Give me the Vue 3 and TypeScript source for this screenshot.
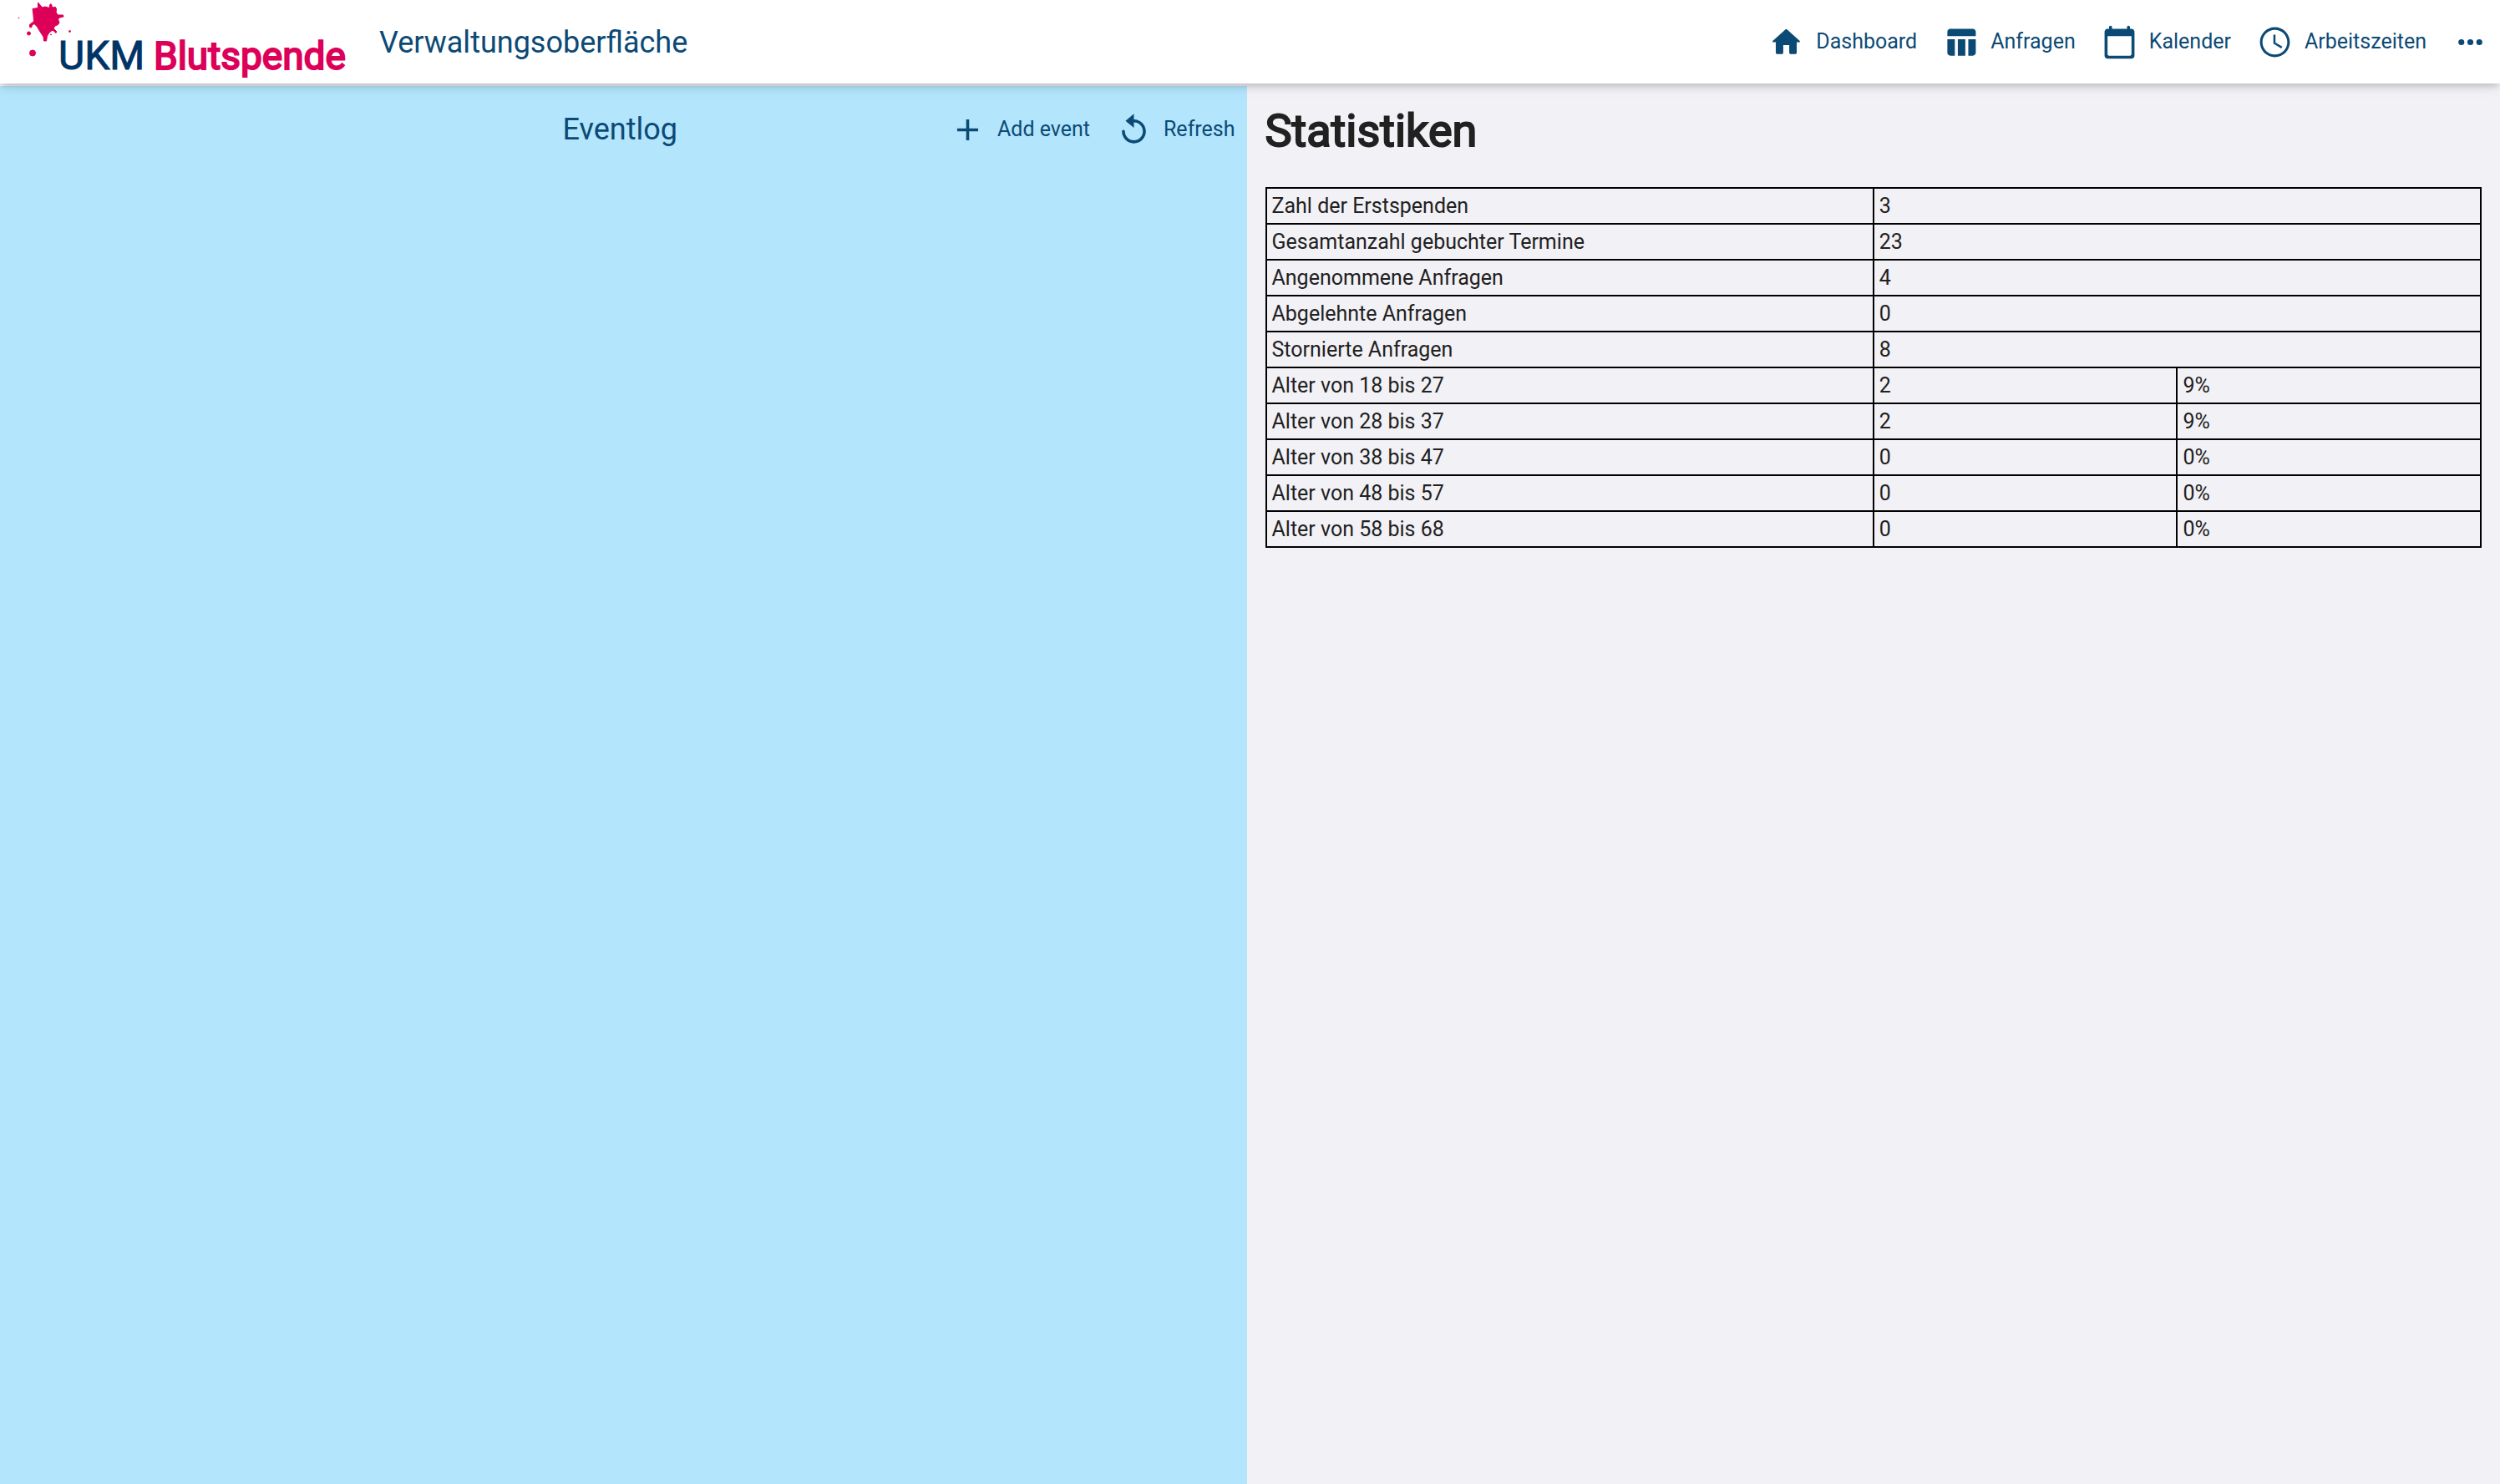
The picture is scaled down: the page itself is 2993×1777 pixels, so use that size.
<script setup lang="ts">
interface NavItem {
  label: string
  icon: string
}

interface StatRow {
  label: string
  value: number
  share?: string
}

const navItems: NavItem[] = [
  {
    label: 'Dashboard',
    icon: 'M10 19v-5h4v5c0 .55.45 1 1 1h3c.55 0 1-.45 1-1v-7h1.7c.46 0 .68-.57.33-.87L12.67 3.6c-.38-.34-.96-.34-1.34 0l-8.36 7.53c-.34.3-.13.87.33.87H5v7c0 .55.45 1 1 1h3c.55 0 1-.45 1-1z',
  },
  {
    label: 'Anfragen',
    icon: 'M10 10.02h5V21h-5V10.02zM17 21h3c1.1 0 2-.9 2-2v-9h-5v11zm3-18H5c-1.1 0-2 .9-2 2v3h19V5c0-1.1-.9-2-2-2zM3 19c0 1.1.9 2 2 2h3V10H3v9z',
  },
  {
    label: 'Kalender',
    icon: 'M20 3h-1V2c0-.55-.45-1-1-1s-1 .45-1 1v1H7V2c0-.55-.45-1-1-1s-1 .45-1 1v1H4c-1.1 0-2 .9-2 2v16c0 1.1.9 2 2 2h16c1.1 0 2-.9 2-2V5c0-1.1-.9-2-2-2zm-1 18H5c-.55 0-1-.45-1-1V8h16v12c0 .55-.45 1-1 1z',
  },
  {
    label: 'Arbeitszeiten',
    icon: 'M11.99 2C6.47 2 2 6.48 2 12s4.47 10 9.99 10C17.52 22 22 17.52 22 12S17.52 2 11.99 2zM12 20.3c-4.6 0-8.3-3.7-8.3-8.3S7.4 3.7 12 3.7s8.3 3.7 8.3 8.3-3.7 8.3-8.3 8.3zM12.4 7H11v6l5.25 3.15.75-1.23-4.6-2.67z',
  },
]

const stats: StatRow[] = [
  { label: 'Zahl der Erstspenden', value: 3 },
  { label: 'Gesamtanzahl gebuchter Termine', value: 23 },
  { label: 'Angenommene Anfragen', value: 4 },
  { label: 'Abgelehnte Anfragen', value: 0 },
  { label: 'Stornierte Anfragen', value: 8 },
  { label: 'Alter von 18 bis 27', value: 2, share: '9%' },
  { label: 'Alter von 28 bis 37', value: 2, share: '9%' },
  { label: 'Alter von 38 bis 47', value: 0, share: '0%' },
  { label: 'Alter von 48 bis 57', value: 0, share: '0%' },
  { label: 'Alter von 58 bis 68', value: 0, share: '0%' },
]
</script>

<template>
  <div class="page">
    <header class="topbar">
      <svg class="logo" viewBox="0 0 424 100" role="img" aria-label="UKM Blutspende">
        <g class="splash">
          <path d="M45.5 3 L48.5 6.5 L50.5 9 L54 8 L59 9.5 L60 5 L61.5 5 L62.5 9 L66.5 8.5 L67.5 11 L67 15 L69.5 18 L75.5 18 L76 20 L71.5 21 L69.5 23 L71 27 L69.5 29.5 L66 31 L64 34 L68 38 L67 39.5 L63 36 L59 39 L56.5 43 L55.5 49 L52.5 49 L52 44 L48 38 L44.5 32 L41 28.5 L38.5 30 L37.5 33 L35.5 32.5 L35.5 29.5 L40.5 25.5 L40 18 L39 10.5 L45.5 9.5 Z" />
          <circle cx="34.5" cy="40" r="2" />
          <circle cx="39" cy="63.5" r="3.5" />
          <circle cx="83.5" cy="37.5" r="1" />
          <circle cx="61" cy="41.5" r=".5" />
          <circle cx="22.5" cy="21.5" r=".4" />
        </g>
        <text class="logo-ukm" x="70" y="83">UKM</text>
        <text class="logo-name" x="184" y="83">Blutspende</text>
      </svg>
      <span class="app-title">Verwaltungsoberfläche</span>
      <nav class="nav" aria-label="Hauptnavigation">
        <a v-for="item in navItems" :key="item.label" class="action" href="#">
          <svg class="icon" viewBox="0 0 24 24" aria-hidden="true"><path :d="item.icon" /></svg>
          <span>{{ item.label }}</span>
        </a>
        <button class="action" type="button" aria-label="Mehr">
          <svg class="icon" viewBox="0 0 24 24" aria-hidden="true">
            <circle cx="6" cy="12" r="2" />
            <circle cx="12" cy="12" r="2" />
            <circle cx="18" cy="12" r="2" />
          </svg>
        </button>
      </nav>
    </header>

    <main class="content">
      <section class="eventlog">
        <div class="eventlog-bar">
          <h2 class="eventlog-title">Eventlog</h2>
          <div class="eventlog-actions">
            <button class="action" type="button">
              <svg class="icon" viewBox="0 0 24 24" aria-hidden="true">
                <path d="M19 13h-6v6h-2v-6H5v-2h6V5h2v6h6z" />
              </svg>
              <span>Add event</span>
            </button>
            <button class="action" type="button">
              <svg class="icon" viewBox="0 0 24 24" aria-hidden="true">
                <path d="M12 5V1.2L6.4 6 12 10.6V7c3.31 0 6 2.69 6 6s-2.69 6-6 6-6-2.69-6-6c0-.6-.4-1-1-1s-1 .4-1 1c0 4.42 3.58 8 8 8s8-3.58 8-8-3.58-8-8-8z" />
              </svg>
              <span>Refresh</span>
            </button>
          </div>
        </div>
      </section>

      <section class="statistics">
        <h1 class="statistics-title">Statistiken</h1>
        <table class="stats">
          <colgroup>
            <col class="col-label" />
            <col class="col-value" />
            <col class="col-value" />
          </colgroup>
          <tbody>
            <tr v-for="row in stats" :key="row.label">
              <th scope="row">{{ row.label }}</th>
              <td :colspan="row.share ? 1 : 2">{{ row.value }}</td>
              <td v-if="row.share">{{ row.share }}</td>
            </tr>
          </tbody>
        </table>
      </section>
    </main>
  </div>
</template>

<style>
body {
  margin: 0;
  background: #f2f1f6;
}
</style>

<style scoped>
.page {
  display: flex;
  flex-direction: column;
  min-height: 100vh;
  color: #212121;
  font-family: Roboto, 'Liberation Sans', sans-serif;
  font-size: 25px;
  line-height: 40px;
}

.topbar {
  position: relative;
  z-index: 1;
  display: flex;
  align-items: center;
  height: 100px;
  background: #fff;
  color: #0c4a76;
  box-shadow:
    0 4px 7px -2px rgba(0, 0, 0, 0.15),
    0 7px 9px rgba(0, 0, 0, 0.04),
    0 2px 18px rgba(0, 0, 0, 0.08);
}

.logo {
  flex: none;
  width: 424px;
  height: 100px;
}

.splash {
  fill: #dc0058;
  stroke: #dc0058;
  stroke-linejoin: round;
}

.logo-ukm {
  fill: #003366;
  stroke: #003366;
  font-size: 48px;
}

.logo-name {
  fill: #dc0058;
  stroke: #dc0058;
  stroke-width: 2px;
  font-size: 46px;
}

.app-title {
  margin-left: 30px;
  padding-top: 2px;
  font-size: 36px;
}

.nav {
  display: flex;
  gap: 3px;
  margin-left: auto;
}

.action {
  display: flex;
  align-items: center;
  gap: 14px;
  padding: 0 14px;
  border: 0;
  background: none;
  color: #0c4a76;
  font: inherit;
  text-decoration: none;
  white-space: nowrap;
  cursor: pointer;
}

.icon {
  flex: none;
  width: 43px;
  height: 43px;
  fill: currentColor;
}

.content {
  display: flex;
  flex: 1;
  padding-top: 3px;
}

.eventlog {
  width: calc(50% - 4px);
  background: #b3e5fc;
}

.eventlog-bar {
  display: grid;
  grid-template-columns: 1fr auto 1fr;
  align-items: center;
  height: 104px;
  color: #0c4a76;
}

.eventlog-title {
  grid-column: 2;
  margin: 0 8px 0 0;
  font-size: 36px;
  font-weight: 400;
}

.eventlog-actions {
  display: flex;
  gap: 3px;
  justify-content: flex-end;
}

.statistics {
  flex: 1;
  padding: 20px 22px;
}

.statistics-title {
  margin: 0 0 33px;
  font-size: 54px;
  font-weight: 400;
  line-height: 68px;
  -webkit-text-stroke: 2px #212121;
}

.stats {
  width: 100%;
  border-collapse: collapse;
  table-layout: fixed;
}

.col-label {
  width: 50%;
}

.col-value {
  width: 25%;
}

.stats th,
.stats td {
  height: 41px;
  padding: 0 6px;
  border: 2px solid #000;
  font-weight: 400;
  text-align: left;
}
</style>
